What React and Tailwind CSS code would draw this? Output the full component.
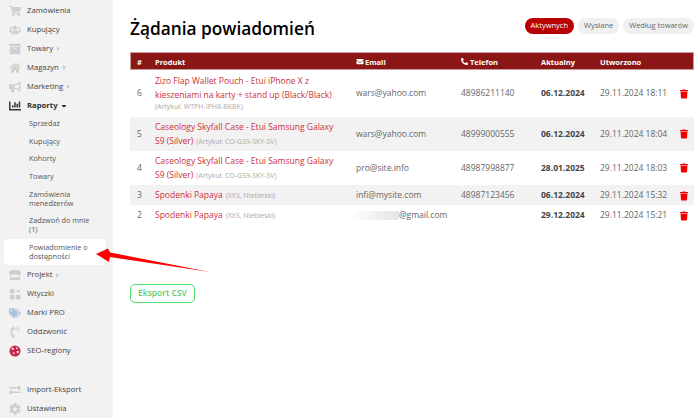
import React from "react";
import { FaShoppingCart, FaUsers, FaArchive, FaHome, FaBullhorn, FaChartBar, FaStore, FaTags, FaPhoneVolume, FaExchangeAlt, FaCog, FaTrash, FaEnvelope, FaPhone, FaCaretRight, FaCaretDown } from "react-icons/fa";

const font = { fontFamily: '"Open Sans", sans-serif' };

function PluginIcon({ className }) {
  return (
    <svg className={className} viewBox="0 0 13 13" fill="currentColor">
      <rect x="1" y="1" width="5" height="5" rx="0.5" />
      <rect x="1" y="7.5" width="5" height="5" rx="0.5" />
      <rect x="7.5" y="7.5" width="5" height="5" rx="0.5" />
      <rect x="8.5" y="2" width="3" height="3" />
    </svg>
  );
}

function SeoIcon({ className }) {
  return (
    <svg className={className} viewBox="0 0 13 13">
      <circle cx="6.5" cy="6.5" r="6" fill="#c2274a" />
      <circle cx="4" cy="4" r="1.4" fill="#f6c9d3" />
      <circle cx="8.5" cy="3.5" r="1" fill="#f6c9d3" />
      <circle cx="9.5" cy="7.5" r="1.4" fill="#f6c9d3" />
      <circle cx="5" cy="9" r="1.1" fill="#f6c9d3" />
    </svg>
  );
}

function MainItem({ icon: Icon, label, arrow, active, cls = "h-[19px]", color = "text-[#cfcfcf]" }) {
  return (
    <div className={`flex items-center ${cls}`}>
      <span className={`w-[27px] pl-[9px] flex items-center ${active ? "text-[#333]" : color}`}>
        <Icon className="w-[12px] h-[12px]" />
      </span>
      <span className={`text-[7.7px] ${active ? "font-bold text-[#333]" : "font-medium text-[#444]"}`}>{label}</span>
      {arrow === "right" && <FaCaretRight className="w-[7px] h-[7px] ml-[2px] text-[#c4c4c4]" />}
      {arrow === "down" && <FaCaretDown className="w-[8px] h-[8px] ml-[2px] text-[#333]" />}
    </div>
  );
}

function SubItem({ children, cls = "" }) {
  return <div className={`pl-[29px] text-[7.3px] leading-[9px] text-[#555] ${cls}`}>{children}</div>;
}

function Sidebar() {
  return (
    <aside className="w-[113px] h-[418px] shrink-0 bg-[#f2f2f2] overflow-hidden pt-px">
      <MainItem icon={FaShoppingCart} label="Zamówienia" />
      <MainItem icon={FaUsers} label="Kupujący" />
      <MainItem icon={FaArchive} label="Towary" arrow="right" />
      <MainItem icon={FaHome} label="Magazyn" arrow="right" />
      <MainItem icon={FaBullhorn} label="Marketing" arrow="right" />
      <MainItem icon={FaChartBar} label="Raporty" arrow="down" active />
      <div className="flex flex-col mt-[4px]">
        <SubItem>Sprzedaż</SubItem>
        <SubItem cls="mt-[9px]">Kupujący</SubItem>
        <SubItem cls="mt-[8px]">Kohorty</SubItem>
        <SubItem cls="mt-[9px]">Towary</SubItem>
        <SubItem cls="mt-[9px]">Zamówienia<br />menedżerów</SubItem>
        <SubItem cls="mt-[8px]">Zadzwoń do mnie<br />(1)</SubItem>
        <div className="mt-[5px] ml-[4px] w-[102px] h-[26px] bg-white rounded-[5px] flex items-center text-[7.3px] leading-[9px] text-[#555] pl-[25px]">
          <span>Powiadomienie o<br />dostępności</span>
        </div>
      </div>
      <MainItem icon={FaStore} label="Projekt" arrow="right" cls="h-[18px] mt-px" />
      <MainItem icon={PluginIcon} label="Wtyczki" />
      <MainItem icon={FaTags} label="Marki PRO" color="text-[#a9c4dc]" />
      <MainItem icon={FaPhoneVolume} label="Oddzwonić" />
      <MainItem icon={SeoIcon} label="SEO-regiony" />
      <MainItem icon={FaExchangeAlt} label="Import-Eksport" cls="h-[19px] mt-[20px]" />
      <MainItem icon={FaCog} label="Ustawienia" />
    </aside>
  );
}

const rows = [
  { n: 6, name: ["Zizo Flap Wallet Pouch - Etui iPhone X z", "kieszeniami na karty + stand up (Black/Black)"], note: "(Artykuł: WTPH-IPH8-BKBK)", noteBlock: true, email: "wars@yahoo.com", tel: "48986211140", akt: "06.12.2024", utw: "29.11.2024 18:11", h: "h-[47px]" },
  { n: 5, name: ["Caseology Skyfall Case - Etui Samsung Galaxy", "S9 (Silver)"], note: "(Artykuł: CO-GS9-SKY-SV)", email: "wars@yahoo.com", tel: "48999000555", akt: "06.12.2024", utw: "29.11.2024 18:04", h: "h-[34px]", bg: "bg-[#f2f2f2]" },
  { n: 4, name: ["Caseology Skyfall Case - Etui Samsung Galaxy", "S9 (Silver)"], note: "(Artykuł: CO-GS9-SKY-SV)", email: "pro@site.info", tel: "48987998877", akt: "28.01.2025", utw: "29.11.2024 18:03", h: "h-[34px]" },
  { n: 3, name: ["Spodenki Papaya"], note: "(XXS, Niebieski)", email: "infi@mysite.com", tel: "48987123456", akt: "06.12.2024", utw: "29.11.2024 15:32", h: "h-[20px] [&>td]:pt-px", bg: "bg-[#f2f2f2]" },
  { n: 2, name: ["Spodenki Papaya"], note: "(XXS, Niebieski)", blur: true, email: "@gmail.com", tel: "", akt: "29.12.2024", utw: "29.11.2024 15:21", h: "h-[20px] [&>td]:pt-px" },
];

function Row({ r }) {
  return (
    <tr className={`${r.h} ${r.bg || ""} text-[8.5px] text-[#666]`}>
      <td className="pl-[7px] align-middle">{r.n}</td>
      <td className="align-middle leading-[13.5px] text-[#cc2f3a]">
        {r.name.map((line, i) => (
          <React.Fragment key={i}>
            {i > 0 && <br />}
            {line}
          </React.Fragment>
        ))}
        {r.noteBlock ? (
          <div className="text-[7px] leading-[12px] text-[#aaa]">{r.note}</div>
        ) : (
          <span className="text-[7px] text-[#aaa] ml-[3px]">{r.note}</span>
        )}
      </td>
      <td className="align-middle">
        {r.blur ? (
          <span className="flex items-center -ml-[4px]">
            <span className="w-[47px] h-[9px] bg-gradient-to-r from-white to-[#e4e4e4]" />
            {r.email}
          </span>
        ) : (
          r.email
        )}
      </td>
      <td className="align-middle">{r.tel}</td>
      <td className="align-middle font-bold text-[#444]">{r.akt}</td>
      <td className="align-middle whitespace-nowrap">{r.utw}</td>
      <td className="align-middle"><FaTrash className="w-[8px] h-[10px] text-[#f00000] ml-[6px]" /></td>
    </tr>
  );
}

function Pill({ children, active }) {
  return (
    <span className={`h-[16px] flex items-center px-[6px] rounded-full text-[7.5px] ${active ? "bg-[#b80000] text-white" : "bg-[#f0f0f0] text-[#666]"}`}>
      {children}
    </span>
  );
}

export default function App() {
  return (
    <div className="relative w-[700px] h-[418px] overflow-hidden bg-white flex" style={font}>
      <Sidebar />
      <main className="flex-1 pl-[17px] pr-[9px]">
        <div className="h-[52px] flex items-center justify-between pt-[5px]">
          <h1 className="text-[17.3px] font-semibold text-black leading-none">Żądania powiadomień</h1>
          <div className="flex gap-[4px] -mt-[6px]">
            <Pill active>Aktywnych</Pill>
            <Pill>Wysłane</Pill>
            <Pill>Według towarów</Pill>
          </div>
        </div>
        <table className="w-[564px] table-fixed border-separate border-spacing-0">
          <colgroup>
            <col className="w-[25px]" />
            <col className="w-[201px]" />
            <col className="w-[105px]" />
            <col className="w-[80px]" />
            <col className="w-[59px]" />
            <col className="w-[74px]" />
            <col className="w-[20px]" />
          </colgroup>
          <thead>
            <tr className="h-[18px] bg-[#8a1616] text-white text-[7.5px] leading-[10px] text-left [&>th]:border-y [&>th]:border-[#c99a9a] [&>th]:pt-px">
              <th className="pl-[6px] font-bold border-l">#</th>
              <th className="font-bold">Produkt</th>
              <th className="font-bold"><span className="flex items-center gap-[1px]"><FaEnvelope className="w-[8px] h-[7px]" />Email</span></th>
              <th className="font-bold"><span className="flex items-center gap-[2px]"><FaPhone className="w-[7px] h-[7px] -scale-x-100" />Telefon</span></th>
              <th className="font-bold">Aktualny</th>
              <th className="font-bold">Utworzono</th>
              <th className="border-r" />
            </tr>
          </thead>
          <tbody>
            {rows.map((r) => <Row key={r.n} r={r} />)}
          </tbody>
        </table>
        <button className="mt-[59px] h-[19px] w-[65px] border-[1.5px] border-[#4fdc68] rounded-[5px] text-[8.5px] font-semibold text-[#5fcb70] bg-white flex items-center justify-center">
          Eksport CSV
        </button>
      </main>
      <svg className="absolute left-0 top-0 pointer-events-none" width="700" height="418" viewBox="0 0 700 418">
        <polygon points="96,254 108,248.5 110,252.5 210,272 110,257 109,262" fill="#ff0000" />
      </svg>
    </div>
  );
}
